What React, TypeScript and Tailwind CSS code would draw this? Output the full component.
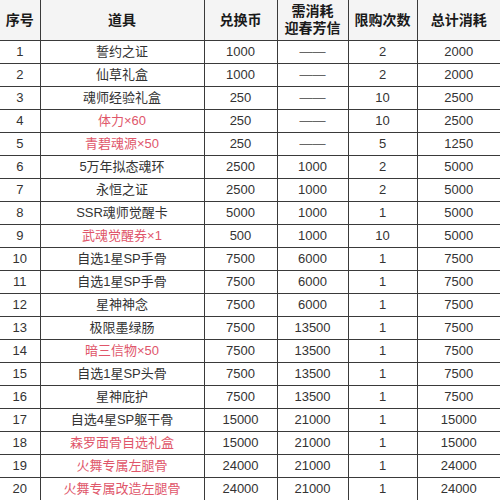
const rows: [number, string, number, string, number, number, boolean][] = [
  [1, "誓约之证", 1000, "——", 2, 2000, false],
  [2, "仙草礼盒", 1000, "——", 2, 2000, false],
  [3, "魂师经验礼盒", 250, "——", 10, 2500, false],
  [4, "体力×60", 250, "——", 10, 2500, true],
  [5, "青碧魂源×50", 250, "——", 5, 1250, true],
  [6, "5万年拟态魂环", 2500, "1000", 2, 5000, false],
  [7, "永恒之证", 2500, "1000", 2, 5000, false],
  [8, "SSR魂师觉醒卡", 5000, "1000", 1, 5000, false],
  [9, "武魂觉醒券×1", 500, "1000", 10, 5000, true],
  [10, "自选1星SP手骨", 7500, "6000", 1, 7500, false],
  [11, "自选1星SP手骨", 7500, "6000", 1, 7500, false],
  [12, "星神神念", 7500, "6000", 1, 7500, false],
  [13, "极限墨绿肠", 7500, "13500", 1, 7500, false],
  [14, "暗三信物×50", 7500, "13500", 1, 7500, true],
  [15, "自选1星SP头骨", 7500, "13500", 1, 7500, false],
  [16, "星神庇护", 7500, "13500", 1, 7500, false],
  [17, "自选4星SP躯干骨", 15000, "21000", 1, 15000, false],
  [18, "森罗面骨自选礼盒", 15000, "21000", 1, 15000, true],
  [19, "火舞专属左腿骨", 24000, "21000", 1, 24000, true],
  [20, "火舞专属改造左腿骨", 24000, "21000", 1, 24000, true],
];

const cell = "border border-[#3a3a3a] text-center p-0";

export default function App() {
  return (
    <div className="w-[500px] h-[500px] bg-white overflow-hidden">
      <table
        className="w-[500px] table-fixed border-collapse text-[13px] leading-none text-[#333] border-hidden"
        style={{ fontFamily: '"Liberation Sans", "Noto Sans CJK SC", sans-serif' }}
      >
        <colgroup>
          <col className="w-[40px]" />
          <col className="w-[164px]" />
          <col className="w-[73px]" />
          <col className="w-[71px]" />
          <col className="w-[69px]" />
          <col className="w-[83px]" />
        </colgroup>
        <thead>
          <tr className="h-[40px] bg-[#f4f4f4] text-[#1a1a1a] font-bold text-[14px]">
            <th className={cell}>序号</th>
            <th className={cell}>道具</th>
            <th className={cell}>兑换币</th>
            <th className={`${cell} leading-[17px]`}>
              需消耗
              <br />
              迎春芳信
            </th>
            <th className={cell}>限购次数</th>
            <th className={cell}>总计消耗</th>
          </tr>
        </thead>
        <tbody>
          {rows.map(([no, name, coin, need, limit, total, red]) => (
            <tr key={no} className="h-[23px]">
              <td className={cell}>{no}</td>
              <td className={`${cell} ${red ? "text-[#e0566a]" : ""}`}>{name}</td>
              <td className={cell}>{coin}</td>
              <td className={`${cell} ${need === "——" ? "text-[#666]" : ""}`}>{need}</td>
              <td className={cell}>{limit}</td>
              <td className={cell}>{total}</td>
            </tr>
          ))}
        </tbody>
      </table>
    </div>
  );
}
